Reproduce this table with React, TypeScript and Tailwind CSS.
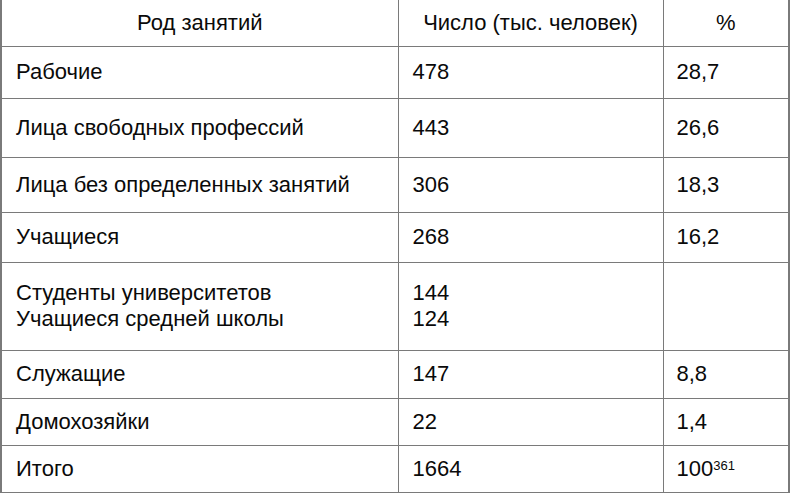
const rows: { label: string[]; num: string[]; pct: string; h: string; sup?: string }[] = [
  { label: ["Рабочие"], num: ["478"], pct: "28,7", h: "h-[52px]" },
  { label: ["Лица свободных профессий"], num: ["443"], pct: "26,6", h: "h-[59px]" },
  { label: ["Лица без определенных занятий"], num: ["306"], pct: "18,3", h: "h-[55px]" },
  { label: ["Учащиеся"], num: ["268"], pct: "16,2", h: "h-[50px]" },
  {
    label: ["Студенты университетов", "Учащиеся средней школы"],
    num: ["144", "124"],
    pct: "",
    h: "h-[88px]",
  },
  { label: ["Служащие"], num: ["147"], pct: "8,8", h: "h-[48px]" },
  { label: ["Домохозяйки"], num: ["22"], pct: "1,4", h: "h-[47px]" },
  { label: ["Итого"], num: ["1664"], pct: "100", sup: "361", h: "h-[47px]" },
];

export default function App() {
  return (
    <div className="w-[790px] h-[494px] bg-white overflow-hidden">
      <table
        className="w-[790px] table-fixed border-collapse text-[22px] leading-[26px] text-[#0a0a0a]"
        style={{ fontFamily: '"Liberation Sans", Arial, sans-serif' }}
      >
        <colgroup>
          <col className="w-[397px]" />
          <col className="w-[265px]" />
          <col />
        </colgroup>
        <thead>
          <tr className="h-[46px]">
            <th className="font-normal text-center border-l-2 border-r border-b border-[#7a7a7a]">
              Род занятий
            </th>
            <th className="font-normal text-center border-r border-b border-[#7a7a7a]">
              Число (тыс. человек)
            </th>
            <th className="font-normal text-center border-r-2 border-b border-[#7a7a7a]">%</th>
          </tr>
        </thead>
        <tbody>
          {rows.map((r, i) => (
            <tr key={i} className={r.h}>
              <td className="pl-[14px] align-middle border-l-2 border-r border-b border-[#7a7a7a]">
                {r.label.map((l) => (
                  <div key={l}>{l}</div>
                ))}
              </td>
              <td className="pl-[14px] align-middle border-r border-b border-[#7a7a7a]">
                {r.num.map((n) => (
                  <div key={n}>{n}</div>
                ))}
              </td>
              <td className="pl-[13px] align-middle border-r-2 border-b border-[#7a7a7a]">
                {r.pct}
                {r.sup && <sup className="text-[13px] relative -top-[6px]">{r.sup}</sup>}
              </td>
            </tr>
          ))}
        </tbody>
      </table>
    </div>
  );
}
